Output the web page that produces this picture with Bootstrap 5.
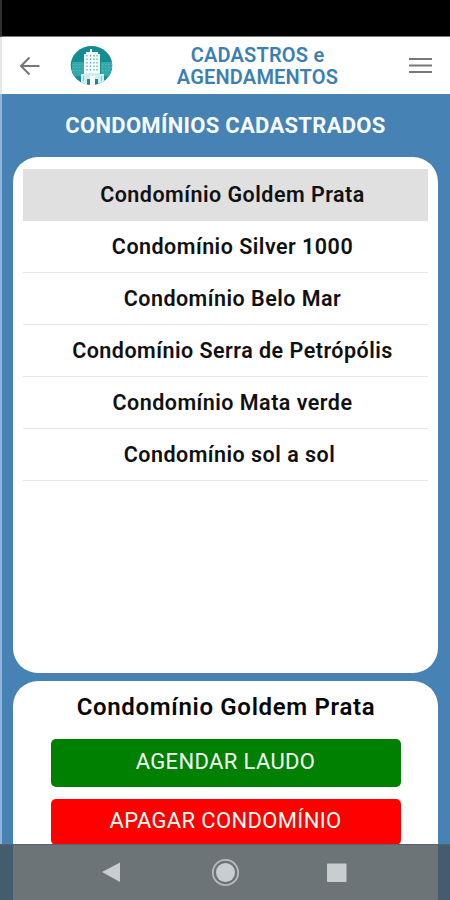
<!DOCTYPE html>
<html lang="pt-BR">
<head>
<meta charset="utf-8">
<meta name="viewport" content="width=device-width, initial-scale=1">
<title>Cadastros e Agendamentos</title>
<link href="https://cdn.jsdelivr.net/npm/bootstrap@5.3.0/dist/css/bootstrap.min.css" rel="stylesheet">
<style>
body{font-family:Roboto,"Liberation Sans",sans-serif;background:#4682b4;color:#111;overflow:hidden}
.screen{width:450px;height:900px;overflow:hidden;box-shadow:inset 2px 0 #8fb6da}
.status-strip{height:37px;background:#000;border-left:2px solid #303030;border-bottom:1px solid #777}
.top-bar{height:57px;background:#fff;border-left:2px solid #e6e6e6;padding:0 18px 0 15px}
.logo{margin-left:27px}
.bar-title{font-size:20px;line-height:22px;font-weight:600;color:#3c7fb4;padding-right:7px;letter-spacing:.2px}
.heading{height:63px;padding-top:2px;padding-left:1px;font-size:22px;font-weight:700;letter-spacing:.3px;color:#f4faff}
.panel{background:#fff;border-radius:25px;margin:0 12px 0 13px}
.list-panel{height:516px;padding:12px 10px 0 10px}
.condo{height:52px;font-size:21.5px;font-weight:600;letter-spacing:.48px;border:0;border-radius:0;padding:0 0 0 14px;color:#111;line-height:1}
.list-group-flush>.condo,.list-group-flush>.condo:last-child{border-bottom:1px solid #e6e6e6}
.condo:last-child{padding-left:8px}
.list-group-flush>.condo.selected{background:#e0e0e0;border-color:#e0e0e0}
.detail-panel{margin-top:8px;height:163px;border-radius:25px 25px 0 0;padding:0 37.5px 0 37.5px}
.detail-name{height:57.5px;font-size:24px;font-weight:600;padding-bottom:5px;padding-left:1px;letter-spacing:.68px;color:#080808}
.action{height:48px;border-radius:5px;border:0;font-size:22px;color:#f4fff4;letter-spacing:.35px;line-height:1;padding:0 0 1px}
.go{background:#008000}
.del{background:#f00;margin-top:12px;height:46px}
.nav-strip{height:56px;background:#6d7478;border-top:1px solid #5b6265;box-shadow:inset 13px 0 #455c6f,inset -12px 0 #455c6f}
</style>
</head>
<body>
<main class="screen d-flex flex-column">
  <div class="status-strip flex-shrink-0"></div>
  <header class="top-bar d-flex align-items-center flex-shrink-0">
    <svg width="26" height="26" viewBox="0 0 26 26" fill="none" stroke="#777" stroke-width="2"><path d="M22.500 13H4M12.500 4.500L4 13l8.500 8.500"/></svg>
    <svg class="logo" width="44" height="42" viewBox="0 0 44 42">
      <defs><clipPath id="round"><ellipse cx="21.500" cy="20.500" rx="20.800" ry="19.500"/></clipPath></defs>
      <g clip-path="url(#round)">
        <path fill="#138d91" d="M0 0h44v42H0z"/>
        <path fill="#35a8aa" d="M2 17h12v14H2zM31 17h11v14H31z"/>
        <path stroke="#58b5b7" stroke-dasharray="1.500 1.500" d="M3 19.500h10M3 22.500h10M3 25.500h10M32 19.500h10M32 22.500h10M32 25.500h10"/>
        <path fill="#f3fbfb" d="M20 7V4h2v3h6v2h2v20H14V9h2V7z"/>
        <path stroke="#55abb0" stroke-width="1.200" stroke-dasharray="1.500 2" fill="none" d="M17 10v17M20.500 10v17M24 10v17M27 10v17"/>
        <path fill="#d0eded" d="M11 29h5v-1h14v1h4v11H11z"/>
        <path fill="#86c9ca" d="M13 31h1v5h-1zM31 31h1v5h-1z"/>
        <path fill="#138d91" d="M17 34h3v6h-3zM25 34h3v6h-3z"/>
        <path fill="#fff" d="M20 31h5v11h-5z"/>
      </g>
    </svg>
    <div class="bar-title text-center flex-grow-1">CADASTROS e<br>AGENDAMENTOS</div>
    <svg width="24" height="24" viewBox="0 0 24 24" stroke="#777" stroke-width="2.200"><path d="M1 5h23M1 11.500h23M1 18h23"/></svg>
  </header>
  <h1 class="heading d-flex align-items-center justify-content-center m-0 flex-shrink-0">CONDOMÍNIOS CADASTRADOS</h1>
  <section class="panel list-panel flex-shrink-0">
    <div class="list-group list-group-flush">
      <div class="condo selected list-group-item d-flex align-items-center justify-content-center">Condomínio Goldem Prata</div>
      <div class="condo list-group-item d-flex align-items-center justify-content-center">Condomínio Silver 1000</div>
      <div class="condo list-group-item d-flex align-items-center justify-content-center">Condomínio Belo Mar</div>
      <div class="condo list-group-item d-flex align-items-center justify-content-center">Condomínio Serra de Petrópólis</div>
      <div class="condo list-group-item d-flex align-items-center justify-content-center">Condomínio Mata verde</div>
      <div class="condo list-group-item d-flex align-items-center justify-content-center">Condomínio sol a sol</div>
    </div>
  </section>
  <section class="panel detail-panel flex-shrink-0">
    <h2 class="detail-name d-flex align-items-center justify-content-center m-0">Condomínio Goldem Prata</h2>
    <button class="action go btn d-block w-100">AGENDAR LAUDO</button>
    <button class="action del btn d-block w-100">APAGAR CONDOMÍNIO</button>
  </section>
  <footer class="nav-strip flex-shrink-0">
    <svg width="450" height="55" viewBox="0 0 450 55" class="d-block">
      <path fill="#c8cdcf" d="M102 27L120 17.500V37z"/>
      <circle cx="225.500" cy="27.500" r="12.700" fill="none" stroke="#b6bcbe" stroke-width="1.800"/>
      <circle cx="225.500" cy="27.500" r="9.500" fill="#c8cdcf"/>
      <rect x="327" y="18.500" width="19.500" height="18.500" rx="1" fill="#c8cdcf"/>
    </svg>
  </footer>
</main>
<script src="https://cdn.jsdelivr.net/npm/bootstrap@5.3.0/dist/js/bootstrap.bundle.min.js"></script>
</body>
</html>
